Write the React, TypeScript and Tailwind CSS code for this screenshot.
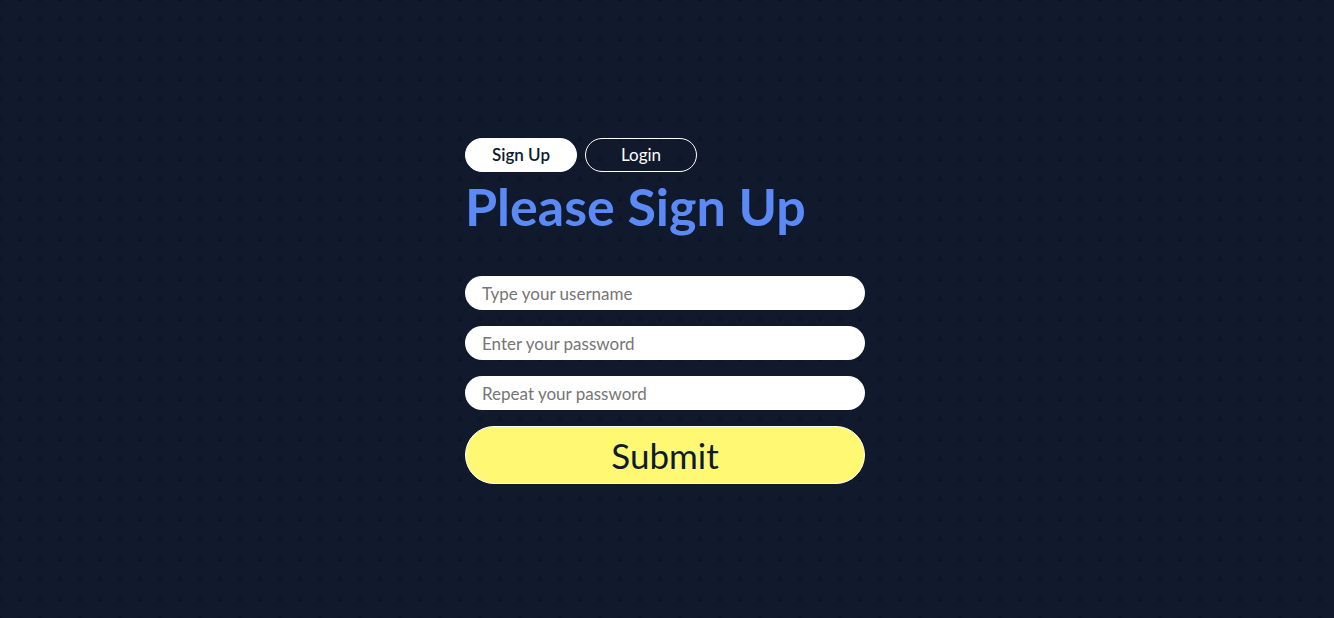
import React from "react";

function App() {
  const [tab, setTab] = React.useState<"signup" | "login">("signup");

  return (
    <div className="min-h-screen w-full bg-[#111a2d] bg-[radial-gradient(circle_at_10px_10px,transparent_1.2px,#0c1424_1.6px,#0c1424_2.2px,transparent_2.7px)] bg-[length:20px_20px] bg-[position:10px_9px] flex items-center justify-center pr-[4px] pt-[4px] font-['Lato','Liberation_Sans',sans-serif]">
      <div className="w-[400px] flex flex-col">
        <div className="flex gap-2">
          <button
            onClick={() => setTab("signup")}
            className="w-[112px] h-[34px] rounded-full bg-white text-[#0d1b2e] text-[17px] font-semibold border border-white"
          >
            Sign Up
          </button>
          <button
            onClick={() => setTab("login")}
            className="w-[112px] h-[34px] rounded-full bg-transparent text-white text-[17px] border border-white"
          >
            Login
          </button>
        </div>
        <h1 className="mt-[4px] text-[52px] leading-[60px] font-bold text-[#5b8af7]">
          {tab === "signup" ? "Please Sign Up" : "Please Login"}
        </h1>
        <form className="mt-[40px] flex flex-col gap-4" onSubmit={(e) => e.preventDefault()}>
          <input
            type="text"
            placeholder="Type your username"
            className="h-[34px] rounded-full bg-white px-[17px] text-[17px] text-[#222] placeholder:text-[#757575] outline-none"
          />
          <input
            type="password"
            placeholder="Enter your password"
            className="h-[34px] rounded-full bg-white px-[17px] text-[17px] text-[#222] placeholder:text-[#757575] outline-none"
          />
          <input
            type="password"
            placeholder="Repeat your password"
            className="h-[34px] rounded-full bg-white px-[17px] text-[17px] text-[#222] placeholder:text-[#757575] outline-none"
          />
          <button
            type="submit"
            className="h-[58px] rounded-full bg-[#fff873] border border-white text-[#0d1b2e] text-[35px]"
          >
            Submit
          </button>
        </form>
      </div>
    </div>
  );
}

export default App;
